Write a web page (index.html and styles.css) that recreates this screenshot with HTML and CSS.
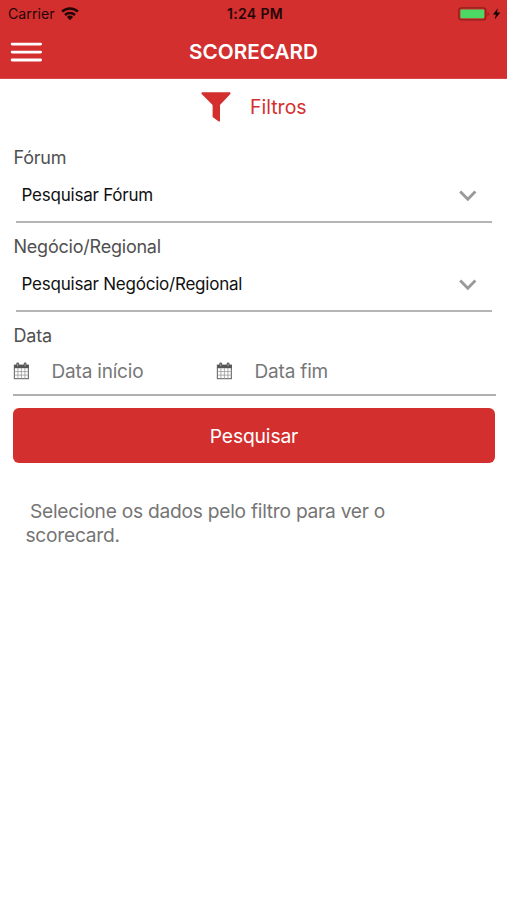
FILE: index.html
```html
<!DOCTYPE html>
<html lang="pt-BR">
<head>
<meta charset="utf-8">
<title>Scorecard</title>
<link rel="stylesheet" href="styles.css">
</head>
<body>
<header class="header">
  <div class="status">
    <div class="carrier"><span class="carrier-name">Carrier</span>
      <svg class="wifi" width="18" height="14" viewBox="0 0 18 14"><g fill="none" stroke="#250606" stroke-width="2.5"><path d="M1.1 4.7a11.4 11.4 0 0 1 15.8 0"/><path d="M4 8a7.2 7.2 0 0 1 10 0"/></g><path d="M5.9 10a4.5 4.5 0 0 1 6.2 0L9 13.2z" fill="#250606"/></svg>
    </div>
    <span class="clock">1:24 PM</span>
    <svg class="battery" width="44" height="14" viewBox="0 0 44 14"><rect x=".8" y=".8" width="27" height="12" rx="2.6" fill="none" stroke="#8f201c" stroke-width="1.3"/><rect x="2.4" y="2.4" width="23.8" height="8.8" rx="1" fill="#4cd964"/><path d="M29.5 5v4q1.4-.5 1.4-2t-1.4-2z" fill="#8f201c"/><path d="M39.9 1.3 34.9 7.6h3L36.7 12.4l5.6-6.8h-3.3z" fill="#160303"/></svg>
  </div>
  <div class="nav">
    <svg class="menu" width="32" height="20" viewBox="0 0 32 20" stroke="#fff" stroke-width="2.8" stroke-linecap="round"><path d="M2.1 2.1h28.5M2.1 10.1h28.5M2.1 18h28.5"/></svg>
    <h1 class="title">SCORECARD</h1>
  </div>
</header>
<main class="content">
  <div class="filter-head">
    <svg width="30" height="30" viewBox="0 0 30 30"><path d="M1.2.3h27.6q1.3.5.3 2L19 13v15.7q-.3 1.3-1.6.6l-5.8-4.2V13L.9 2.3Q-.2.8 1.2.3z" fill="#d32f2f"/></svg>
    <span class="filter-title">Filtros</span>
  </div>
  <section class="field">
    <div class="label">Fórum</div>
    <div class="select"><span class="value">Pesquisar Fórum</span><svg class="chevron" width="18" height="12" viewBox="0 0 18 12"><path d="m1.2 1.5 7.6 7.8 7.6-7.8" fill="none" stroke="#999" stroke-width="2.8"/></svg></div>
  </section>
  <section class="field">
    <div class="label">Negócio/Regional</div>
    <div class="select"><span class="value">Pesquisar Negócio/Regional</span><svg class="chevron" width="18" height="12" viewBox="0 0 18 12"><path d="m1.2 1.5 7.6 7.8 7.6-7.8" fill="none" stroke="#999" stroke-width="2.8"/></svg></div>
  </section>
  <section class="field field-date">
    <div class="label">Data</div>
    <div class="dates">
      <div class="date"><svg width="17" height="18" viewBox="0 0 17 18"><path d="M1.4 3.2h14v13.5h-14z" fill="#fff" stroke="#777" stroke-width="1.2"/><path d="M1.2 3h14.6v3.2H1.2z" fill="#555"/><path d="M4.9 6v11M8.4 6v11M11.9 6v11M1.5 9.6h14M1.5 13.1h14" stroke="#999" stroke-width=".8"/><path d="M4.7 1.8v2.6M12.1 1.8v2.6" stroke="#555" stroke-width="2.8" stroke-linecap="round"/><path d="M4.7 1.7v2.6M12.1 1.7v2.6" stroke="#bbb" stroke-width=".8"/></svg><span class="hint">Data início</span></div>
      <div class="date"><svg width="17" height="18" viewBox="0 0 17 18"><path d="M1.4 3.2h14v13.5h-14z" fill="#fff" stroke="#777" stroke-width="1.2"/><path d="M1.2 3h14.6v3.2H1.2z" fill="#555"/><path d="M4.9 6v11M8.4 6v11M11.9 6v11M1.5 9.6h14M1.5 13.1h14" stroke="#999" stroke-width=".8"/><path d="M4.7 1.8v2.6M12.1 1.8v2.6" stroke="#555" stroke-width="2.8" stroke-linecap="round"/><path d="M4.7 1.7v2.6M12.1 1.7v2.6" stroke="#bbb" stroke-width=".8"/></svg><span class="hint">Data fim</span></div>
    </div>
  </section>
  <button class="search">Pesquisar</button>
  <p class="message"><span class="line-first">Selecione os dados pelo filtro para ver o</span><br><span>scorecard.</span></p>
</main>
</body>
</html>
```
FILE: styles.css
```css
* { box-sizing: border-box; }
body {
  margin: 0;
  background: #fff;
  font-family: Inter, "Liberation Sans", sans-serif;
  white-space: nowrap;
}
svg { display: block; flex: none; }
.header { height: 79px; background: #d32f2f; border-bottom: 1px solid #d94848; }
.status {
  display: grid;
  grid-template-columns: 1fr auto 1fr;
  align-items: center;
  height: 27px;
  padding: 0 5px 0 8px;
  color: #250606;
}
.carrier { display: flex; align-items: center; gap: 6.5px; }
.carrier-name { font-size: 14.2px; }
.clock { font-size: 14px; font-weight: 600; letter-spacing: .35px; }
.battery { justify-self: end; }
.nav {
  display: grid;
  grid-template-columns: 1fr auto 1fr;
  align-items: center;
  height: 50px;
  padding: 0 10px;
}
.title { margin: 0; color: #fff; font-size: 20.7px; font-weight: 600; line-height: 24px; }
.content { padding: 0 12px 0 13px; }
.filter-head { display: flex; align-items: center; gap: 19px; height: 56px; padding-left: 188px; }
.filter-title { color: #d32f2f; font-size: 19.5px; }
.field { height: 89px; padding-top: 11px; }
.label {
  height: 24px;
  padding-left: .5px;
  color: #505050;
  font-size: 18px;
  letter-spacing: -.22px;
  line-height: 24px;
}
.select {
  display: flex;
  align-items: center;
  justify-content: space-between;
  height: 53px;
  margin: 0 3px;
  padding: 0 15px 1px 5.5px;
  border-bottom: 2px solid #b5b5b5;
}
.value { color: #111; font-size: 17px; letter-spacing: -.22px; }
.chevron { margin-top: 2px; }
.field-date { height: 90px; }
.dates {
  display: grid;
  grid-template-columns: 203px 1fr;
  height: 48px;
  margin-right: -1px;
  border-bottom: 2px solid #b0b0b0;
}
.date { display: flex; align-items: center; gap: 21.6px; }
.hint { color: #777; font-size: 19px; letter-spacing: -.2px; }
.search {
  display: block;
  width: 482px;
  height: 55px;
  margin-top: 5px;
  padding: 0;
  border: 0;
  border-radius: 6px;
  background: #d32f2f;
  color: #fff;
  font: 400 19.3px/56px Inter, "Liberation Sans", sans-serif;
  letter-spacing: -.15px;
}
.message {
  margin: 37px 0 0 12.5px;
  color: #757575;
  font-size: 19.2px;
  letter-spacing: -.26px;
  line-height: 23.5px;
}
.line-first { padding-left: 4.5px; }
```
